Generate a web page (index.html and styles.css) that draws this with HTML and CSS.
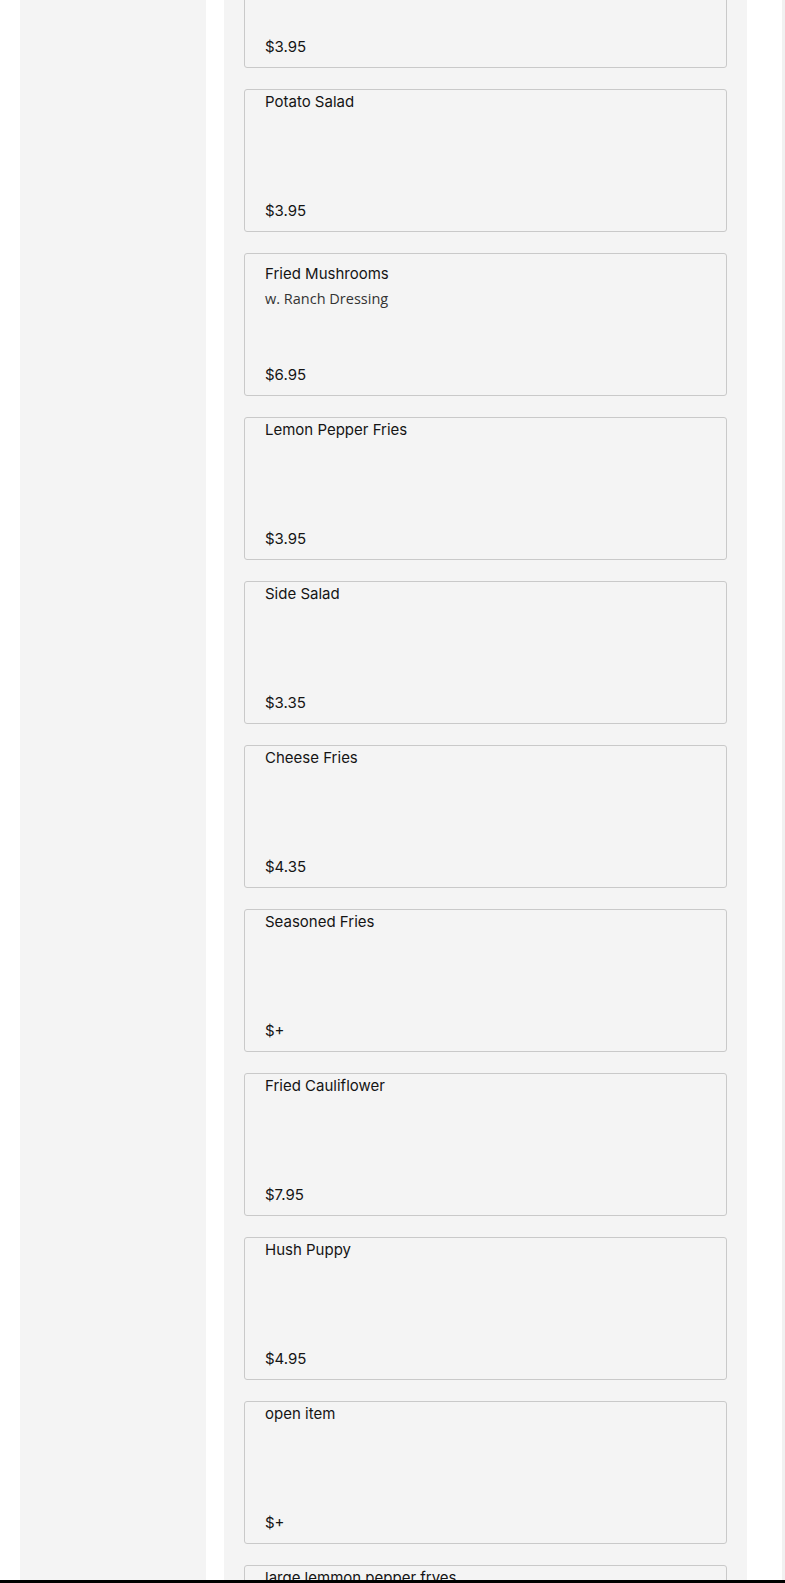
FILE: index.html
```html
<!DOCTYPE html>
<html lang="en">
<head>
<meta charset="utf-8">
<title>Menu</title>
<link rel="stylesheet" href="styles.css">
</head>
<body>
<div class="layout">
  <aside class="sidebar"></aside>
  <main class="menu">
    <div class="items">
      <div class="item"><div class="info"><div class="title">&nbsp;</div></div><div class="price">$3.95</div></div>
      <div class="item"><div class="info"><div class="title">Potato Salad</div></div><div class="price">$3.95</div></div>
      <div class="item has-desc"><div class="info"><div class="title">Fried Mushrooms</div><div class="desc">w. Ranch Dressing</div></div><div class="price">$6.95</div></div>
      <div class="item"><div class="info"><div class="title">Lemon Pepper Fries</div></div><div class="price">$3.95</div></div>
      <div class="item"><div class="info"><div class="title">Side Salad</div></div><div class="price">$3.35</div></div>
      <div class="item"><div class="info"><div class="title">Cheese Fries</div></div><div class="price">$4.35</div></div>
      <div class="item"><div class="info"><div class="title">Seasoned Fries</div></div><div class="price">$+</div></div>
      <div class="item"><div class="info"><div class="title">Fried Cauliflower</div></div><div class="price">$7.95</div></div>
      <div class="item"><div class="info"><div class="title">Hush Puppy</div></div><div class="price">$4.95</div></div>
      <div class="item"><div class="info"><div class="title">open item</div></div><div class="price">$+</div></div>
      <div class="item"><div class="info"><div class="title">large lemmon pepper fryes</div></div><div class="price">$5.95</div></div>
    </div>
  </main>
  <aside class="cart"></aside>
</div>
<div class="bottom-bar"></div>
</body>
</html>
```
FILE: styles.css
```css
html, body {
  margin: 0;
  padding: 0;
  background: #ffffff;
}
body {
  font-family: Inter, "Noto Sans", sans-serif;
  color: #151515;
  overflow: hidden;
  height: 1583px;
}
.layout {
  display: flex;
  align-items: stretch;
  padding-left: 20px;
  height: 1583px;
  overflow: hidden;
}
.sidebar {
  width: 186px;
  flex: none;
  background: #f4f4f4;
}
.menu {
  width: 523px;
  flex: none;
  margin-left: 18px;
  background: #f4f4f4;
  padding: 0 20px;
  box-sizing: border-box;
}
.cart {
  flex: 1;
  margin-left: 35px;
  background: #f1f1f1;
}
.items {
  margin-top: -75px;
  display: flex;
  flex-direction: column;
  gap: 21px;
}
.item {
  height: 143px;
  box-sizing: border-box;
  border: 1px solid #c9c9c9;
  border-radius: 3px;
  background: #f4f4f4;
  padding: 2px 20px 10px;
  display: flex;
  flex-direction: column;
}
.item.has-desc .info {
  padding-top: 8px;
}
.title {
  font-size: 15px;
  line-height: 20px;
  font-weight: 400;
  color: #151515;
}
.desc {
  font-family: "Open Sans", sans-serif;
  font-size: 14.5px;
  line-height: 20px;
  margin-top: 5px;
  color: #333333;
}
.price {
  margin-top: auto;
  font-size: 15px;
  line-height: 20px;
  color: #151515;
}
.bottom-bar {
  position: fixed;
  left: 0;
  right: 0;
  bottom: 0;
  height: 3px;
  background: #000000;
}
```
